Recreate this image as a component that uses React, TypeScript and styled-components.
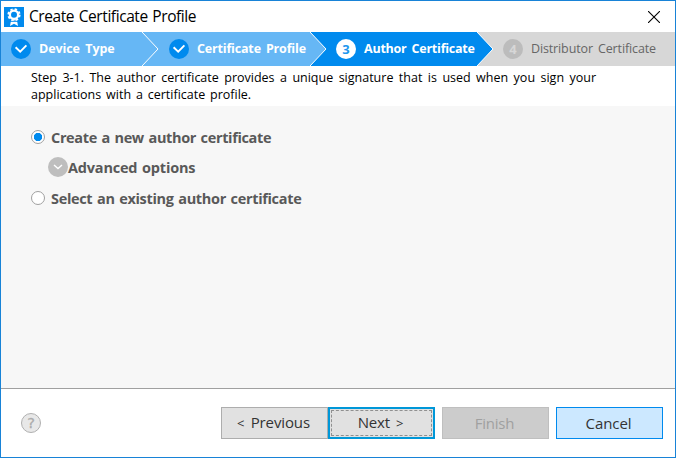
import React from "react";
import styled, { createGlobalStyle } from "styled-components";

const GlobalStyle = createGlobalStyle`
  *, *::before, *::after { box-sizing: border-box; }
  body { margin: 0; background: #fff; font-family: "Open Sans", "Noto Sans", sans-serif; }
`;

const Dialog = styled.div`
  width: 676px;
  height: 458px;
  display: flex;
  flex-direction: column;
  background: #fff;
  border: 1px solid #1883d7;
  overflow: hidden;
`;

const TitleBar = styled.header`
  height: 31px;
  flex: none;
  display: flex;
  align-items: center;
  padding: 0 15px 0 3px;
`;

const Title = styled.h1`
  margin: 0 auto 0 5px;
  font-size: 15.5px;
  font-weight: 400;
  line-height: 29px;
  letter-spacing: -0.42px;
  word-spacing: 1px;
  color: #000;
  white-space: nowrap;
`;

const PlainButton = styled.button`
  display: flex;
  padding: 0;
  border: 0;
  background: none;
`;

const Steps = styled.ol`
  height: 34px;
  flex: none;
  display: grid;
  grid-template-columns: 141px 168px 167px 198px;
  margin: 0;
  padding: 0;
  list-style: none;
`;

type StepState = "done" | "current" | "todo";
const stepFill = { done: "#66b7f5", current: "#008aee", todo: "#d7d7d7" };

const Step = styled.li<{ $state: StepState; $inset: number }>`
  position: relative;
  display: flex;
  align-items: center;
  gap: 8px;
  padding-left: ${(p) => p.$inset}px;
  background: ${(p) => stepFill[p.$state]};
`;

const StepLabel = styled.span<{ $state: StepState; $ls: number; $ws: number }>`
  position: relative;
  z-index: 2;
  font-size: 12.5px;
  line-height: 34px;
  height: 34px;
  font-weight: ${(p) => (p.$state === "todo" ? 400 : 700)};
  color: ${(p) => (p.$state === "todo" ? "#666" : "#fff")};
  letter-spacing: ${(p) => p.$ls}px;
  word-spacing: ${(p) => p.$ws}px;
  white-space: nowrap;
`;

const Badge = styled.span<{ $state: StepState }>`
  width: 20px;
  height: 20px;
  flex: none;
  display: flex;
  align-items: center;
  justify-content: center;
  border-radius: 50%;
  font-size: 13px;
  line-height: 20px;
  font-weight: 700;
  background: ${(p) => (p.$state === "current" ? "#fff" : p.$state === "done" ? "#008aee" : "#bcbcbc")};
  color: ${(p) => (p.$state === "current" ? "#2196ee" : "#d7d7d7")};
`;

const Chevron = styled.svg`
  position: absolute;
  left: 100%;
  top: 0;
  z-index: 1;
`;

const Description = styled.div`
  height: 40px;
  flex: none;
  padding: 3px 0 0 30px;
  font-size: 12.5px;
  line-height: 17px;
  color: #000;
`;

const Line = styled.span<{ $ws: number }>`
  display: block;
  white-space: nowrap;
  word-spacing: ${(p) => p.$ws}px;
`;

const Content = styled.main`
  flex: 1;
  display: flex;
  flex-direction: column;
  padding: 20px 0 0 30px;
  background: #f7f7f7;
  border-bottom: 1px solid #a0a0a0;
`;

const Option = styled.label<{ $height: number }>`
  display: flex;
  align-items: center;
  height: ${(p) => p.$height}px;
`;

const OptionLabel = styled.span<{ $ls: number }>`
  padding-top: 2px;
  font-size: 14.5px;
  font-weight: 700;
  line-height: 20px;
  color: #595959;
  white-space: nowrap;
  letter-spacing: ${(p) => p.$ls}px;
  word-spacing: 1.2px;
`;

const Radio = styled.span<{ $checked?: boolean }>`
  width: 14px;
  height: 14px;
  flex: none;
  margin-right: 6px;
  border: 1px solid #a0a0a0;
  border-radius: 50%;
  background: ${(p) => (p.$checked ? "radial-gradient(circle, #008aee 3.8px, #fff 4.5px)" : "#fff")};
`;

const Expander = styled.span`
  width: 20px;
  height: 20px;
  margin-left: 17px;
  display: flex;
  align-items: center;
  justify-content: center;
  border-radius: 50%;
  background: #bebebe;
`;

const Footer = styled.footer`
  height: 68px;
  flex: none;
  display: flex;
  align-items: center;
  padding: 0 12px 0 20px;
`;

const Help = styled.button`
  width: 20px;
  height: 20px;
  margin-right: auto;
  padding: 0;
  border: 1px solid #b0b0b0;
  border-radius: 50%;
  background: #e8e8e8;
  color: #acacac;
  font: 400 14.5px/18px "DejaVu Sans", sans-serif;
  -webkit-text-stroke: 0.3px #acacac;
`;

type Kind = "normal" | "focused" | "disabled" | "accent";
const kinds = {
  normal: "background:#e1e1e1;border:1px solid #adadad;color:#333;",
  focused: "background:#e1e1e1;border:2px solid #0097d8;color:#333;",
  disabled: "background:#ccc;border:1px solid #bfbfbf;color:#a0a0a0;",
  accent: "background:#cce8ff;border:1px solid #008aee;color:#333;",
};

const Button = styled.button<{ $kind: Kind; $gap?: number; $ls: number }>`
  width: 107px;
  height: 32px;
  margin-left: ${(p) => p.$gap ?? 0}px;
  padding: 0 2px 1px 0;
  display: grid;
  place-items: center;
  font-family: inherit;
  font-size: 15px;
  line-height: 20px;
  letter-spacing: ${(p) => p.$ls}px;
  word-spacing: 2.5px;
  white-space: nowrap;
  ${(p) => kinds[p.$kind]}
  ${(p) => p.$kind === "focused" && "outline:1px dashed #909090;outline-offset:-4px;"}
`;

const Arrow = styled.span`
  font-size: 13px;
`;

const Check = () => (
  <svg width="14" height="12" viewBox="0 0 14 12" fill="none">
    <path d="M1.6 4.2 6.2 8.6 12.4 2.4" stroke="#fff" strokeWidth="1.9" />
  </svg>
);

interface StepData {
  label: string;
  state: StepState;
  inset: number;
  ls: number;
  ws: number;
}

const steps: StepData[] = [
  { label: "Device Type", state: "done", inset: 10, ls: -0.1, ws: 2.4 },
  { label: "Certificate Profile", state: "done", inset: 27, ls: -0.17, ws: 2 },
  { label: "Author Certificate", state: "current", inset: 26, ls: -0.23, ws: 2 },
  { label: "Distributor Certificate", state: "todo", inset: 26, ls: -0.13, ws: 2 },
];

export default function App() {
  return (
    <>
      <GlobalStyle />
      <Dialog>
        <TitleBar>
          <svg width="20" height="20" viewBox="0 0 20 20" fill="none">
            <rect width="20" height="20" fill="#008aee" />
            <path d="M7 13.5 6 19l4-2.2 4 2.2-1-5.5z" fill="#fff" />
            <circle cx="10" cy="7.8" r="5.3" fill="#fff" />
            <circle cx="10" cy="7.8" r="5.7" stroke="#fff" strokeWidth="1.8" strokeDasharray="2.4 2.08" />
            <circle cx="10" cy="7.8" r="3" fill="#008aee" />
            <path d="M6 14.4h8" stroke="#008aee" strokeWidth="0.9" />
          </svg>
          <Title>Create Certificate Profile</Title>
          <PlainButton aria-label="Close">
            <svg width="12" height="12" viewBox="0 0 12 12">
              <path d="M0 0 12 12M12 0 0 12" stroke="#000" strokeWidth="1.1" />
            </svg>
          </PlainButton>
        </TitleBar>
        <Steps>
          {steps.map((s, i) => (
            <Step key={s.label} $state={s.state} $inset={s.inset}>
              <Badge $state={s.state}>{s.state === "done" ? <Check /> : i + 1}</Badge>
              <StepLabel $state={s.state} $ls={s.ls} $ws={s.ws}>{s.label}</StepLabel>
              {i < 3 && (
                <Chevron width="17" height="34" viewBox="0 0 17 34">
                  <path d="M0 0 16 17 0 34z" fill={stepFill[s.state]} />
                  <path d="M0 0 16 17 0 34" fill="none" stroke="#fff" strokeWidth="1" />
                </Chevron>
              )}
            </Step>
          ))}
        </Steps>
        <Description>
          <Line $ws={2.2}>Step 3-1. The author certificate provides a unique signature that is used when you sign your</Line>
          <Line $ws={1.6}>applications with a certificate profile.</Line>
        </Description>
        <Content>
          <Option $height={22}>
            <Radio $checked />
            <OptionLabel $ls={-0.36}>Create a new author certificate</OptionLabel>
          </Option>
          <Option as="div" $height={38}>
            <Expander>
              <svg width="10" height="6" viewBox="0 0 10 6" fill="none">
                <path d="M1 1 5 4.6 9 1" stroke="#fff" strokeWidth="1.4" />
              </svg>
            </Expander>
            <OptionLabel $ls={-0.2}>Advanced options</OptionLabel>
          </Option>
          <Option $height={24}>
            <Radio />
            <OptionLabel $ls={-0.33}>Select an existing author certificate</OptionLabel>
          </Option>
        </Content>
        <Footer>
          <Help aria-label="Help">?</Help>
          <Button $kind="normal" $ls={-0.12}><span><Arrow>&lt;</Arrow> Previous</span></Button>
          <Button $kind="focused" $ls={-0.2}><span>Next <Arrow>&gt;</Arrow></span></Button>
          <Button $kind="disabled" $gap={7} $ls={-0.2} disabled>Finish</Button>
          <Button $kind="accent" $gap={7} $ls={-0.1}>Cancel</Button>
        </Footer>
      </Dialog>
    </>
  );
}
